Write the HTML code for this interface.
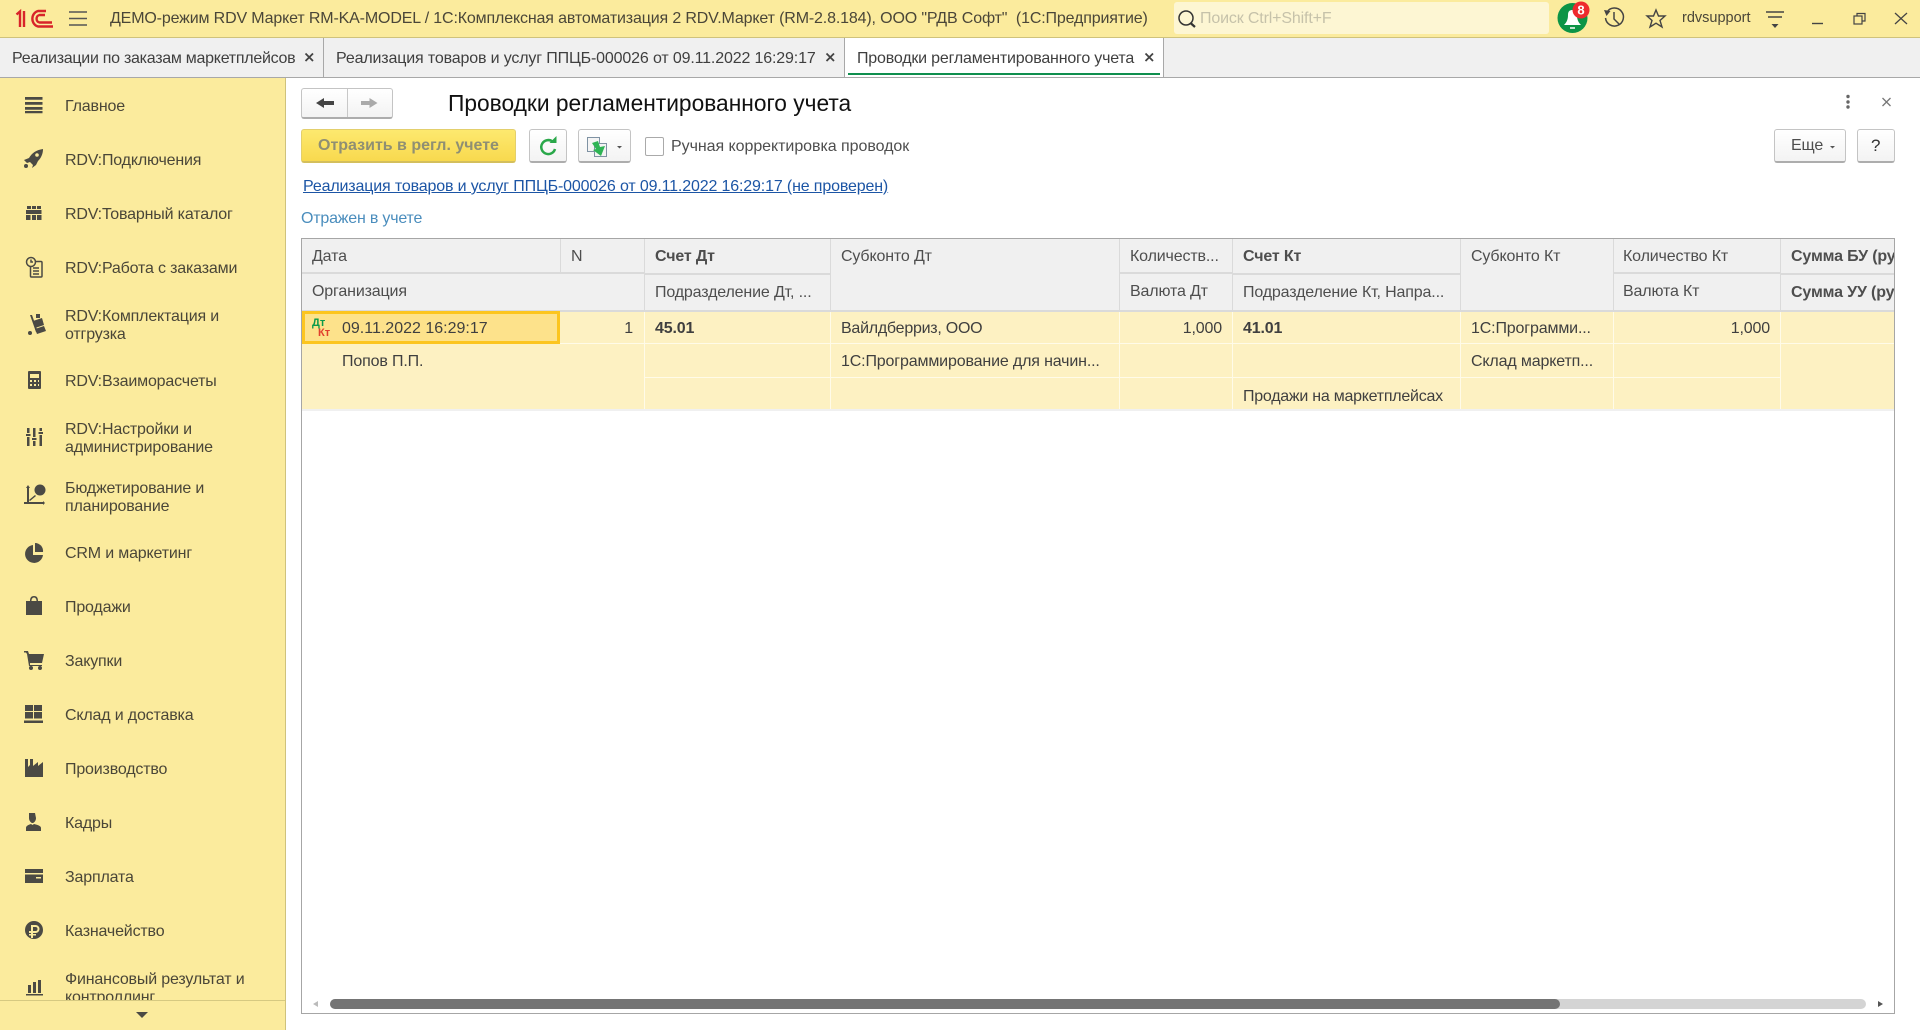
<!DOCTYPE html>
<html lang="ru"><head><meta charset="utf-8"><title>Проводки регламентированного учета</title>
<style>
html,body{margin:0;padding:0;width:1920px;height:1030px;overflow:hidden;background:#fff;font-family:"Liberation Sans",Arial,sans-serif;font-size:16px;letter-spacing:-.15px;color:#3f3f3f}
.t{position:absolute;white-space:nowrap;line-height:18px}
.box{position:absolute;box-sizing:border-box}
.box .t{margin-top:1px}
.btn{position:absolute;box-sizing:border-box;border:1px solid #c4c4c4;border-bottom:2px solid #adadad;border-radius:3px;background:linear-gradient(#fff,#f3f3f3)}
.n{color:#4a4638;line-height:18px;position:absolute;left:65px;white-space:nowrap;letter-spacing:-.17px;margin-top:1px}
.b{font-weight:bold}
.h{color:#4e4e4e}
.l{position:absolute}
.hl{background:#dadada}
.dl{background:#fffbe8}
</style></head><body>

<!-- top bar -->
<div class="box" style="left:0;top:0;width:1920px;height:38px;background:#fbeb9d;border-bottom:1px solid #cfc27c"></div>
<div class="t" style="left:110px;top:10px;color:#4a4638">ДЕМО-режим RDV Маркет RM-KA-MODEL / 1С:Комплексная автоматизация 2 RDV.Маркет (RM-2.8.184), ООО "РДВ Софт"&nbsp; (1С:Предприятие)</div>
<div class="box" style="left:1174px;top:2px;width:375px;height:32px;background:#fdf6d3;border-radius:3px"></div>
<div class="t" style="left:1200px;top:10px;color:#c6c2aa">Поиск Ctrl+Shift+F</div>
<div class="t" style="left:1682px;top:9px;color:#4a4638;font-size:14.5px;letter-spacing:0">rdvsupport</div>

<!-- tabs -->
<div class="box" style="left:0;top:38px;width:1920px;height:40px;background:#f0f0f0;border-bottom:1px solid #a8a8a8"></div>
<div class="box" style="left:323px;top:38px;width:1px;height:39px;background:#a8a8a8"></div>
<div class="box" style="left:844px;top:38px;width:320px;height:40px;background:#fff;border-left:1px solid #a8a8a8;border-right:1px solid #a8a8a8;border-bottom:1px solid #a8a8a8"></div>
<div class="box" style="left:848px;top:73px;width:312px;height:2px;background:#0f8f4e"></div>
<div class="t" style="left:12px;top:50px;letter-spacing:-.27px">Реализации по заказам маркетплейсов</div>
<div class="t" style="left:336px;top:50px">Реализация товаров и услуг ППЦБ-000026 от 09.11.2022 16:29:17</div>
<div class="t" style="left:857px;top:50px;letter-spacing:-.19px">Проводки регламентированного учета</div>

<!-- sidebar -->
<div class="box" style="left:0;top:78px;width:286px;height:952px;background:#fbeb9d;border-right:1px solid #cfc27c;overflow:hidden">
<div class="n" style="top:19px">Главное</div>
<div class="n" style="top:73px">RDV:Подключения</div>
<div class="n" style="top:127px">RDV:Товарный каталог</div>
<div class="n" style="top:181px">RDV:Работа с заказами</div>
<div class="n" style="top:229px">RDV:Комплектация и<br>отгрузка</div>
<div class="n" style="top:294px">RDV:Взаиморасчеты</div>
<div class="n" style="top:342px">RDV:Настройки и<br>администрирование</div>
<div class="n" style="top:401px">Бюджетирование и<br>планирование</div>
<div class="n" style="top:466px">CRM и маркетинг</div>
<div class="n" style="top:520px">Продажи</div>
<div class="n" style="top:574px">Закупки</div>
<div class="n" style="top:628px">Склад и доставка</div>
<div class="n" style="top:682px">Производство</div>
<div class="n" style="top:736px">Кадры</div>
<div class="n" style="top:790px">Зарплата</div>
<div class="n" style="top:844px">Казначейство</div>
<div class="n" style="top:892px">Финансовый результат и<br>контроллинг</div>
<div class="box" style="left:0;top:922px;width:285px;height:30px;background:#fbeb9d;border-top:1px solid #d6c981"></div>
</div>

<!-- content toolbar -->
<div class="t" style="left:448px;top:90px;font-size:22.75px;line-height:26px;color:#111;letter-spacing:0">Проводки регламентированного учета</div>
<div class="btn" style="left:301px;top:88px;width:92px;height:31px"></div>
<div class="box" style="left:347px;top:89px;width:1px;height:28px;background:#c8c8c8"></div>
<div class="box" style="left:301px;top:129px;width:215px;height:34px;border:1px solid #e3cf6c;border-bottom:2px solid #d4bf5c;border-radius:3px;background:linear-gradient(#fde96f,#f8d94e)"></div>
<div class="t b" style="left:318px;top:137px;color:#8f8f73;letter-spacing:0">Отразить в регл. учете</div>
<div class="btn" style="left:529px;top:129px;width:38px;height:34px"></div>
<div class="btn" style="left:578px;top:129px;width:53px;height:34px"></div>
<div class="box" style="left:645px;top:137px;width:19px;height:19px;border:1px solid #aaa;border-radius:2px;background:#fff"></div>
<div class="t" style="left:671px;top:138px;color:#4e4e4e;letter-spacing:-.05px">Ручная корректировка проводок</div>
<div class="t" style="left:303px;top:178px;color:#1c55a5;text-decoration:underline">Реализация товаров и услуг ППЦБ-000026 от 09.11.2022 16:29:17 (не проверен)</div>
<div class="t" style="left:301px;top:210px;color:#4a8dbd;letter-spacing:-.2px">Отражен в учете</div>
<div class="btn" style="left:1774px;top:129px;width:72px;height:34px"></div>
<div class="t" style="left:1791px;top:137px;color:#4e4e4e">Еще</div>
<div class="btn" style="left:1857px;top:129px;width:38px;height:34px"></div>
<div class="t" style="left:1871px;top:137px;color:#333;font-size:17px">?</div>

<!-- table -->
<div class="box" style="left:301px;top:238px;width:1594px;height:776px;border:1px solid #a6a6a6;background:#fff;overflow:hidden">
  <div class="box" style="left:0;top:0;width:1592px;height:72px;background:#f0f0f0"></div>
  <div class="box" style="left:0;top:72px;width:1592px;height:98px;background:#fdf1c2"></div>
  <div class="box" style="left:0;top:170px;width:1592px;height:2px;background:#f0f0f0"></div>
  <!-- header lines -->
  <div class="l hl" style="left:258px;top:0;width:1px;height:34px"></div>
  <div class="l hl" style="left:342px;top:0;width:1px;height:72px"></div>
  <div class="l hl" style="left:528px;top:0;width:1px;height:72px"></div>
  <div class="l hl" style="left:817px;top:0;width:1px;height:72px"></div>
  <div class="l hl" style="left:930px;top:0;width:1px;height:72px"></div>
  <div class="l hl" style="left:1158px;top:0;width:1px;height:72px"></div>
  <div class="l hl" style="left:1311px;top:0;width:1px;height:72px"></div>
  <div class="l hl" style="left:1478px;top:0;width:1px;height:72px"></div>
  <div class="l hl" style="left:0;top:33px;width:342px;height:2px"></div>
  <div class="l hl" style="left:343px;top:34px;width:185px;height:2px"></div>
  <div class="l hl" style="left:818px;top:33px;width:112px;height:2px"></div>
  <div class="l hl" style="left:931px;top:34px;width:227px;height:2px"></div>
  <div class="l hl" style="left:1312px;top:33px;width:166px;height:2px"></div>
  <div class="l hl" style="left:1479px;top:34px;width:114px;height:2px"></div>
  <div class="l hl" style="left:0;top:71px;width:1592px;height:2px"></div>
  <!-- data lines -->
  <div class="l dl" style="left:342px;top:73px;width:1px;height:97px"></div>
  <div class="l dl" style="left:528px;top:73px;width:1px;height:97px"></div>
  <div class="l dl" style="left:817px;top:73px;width:1px;height:97px"></div>
  <div class="l dl" style="left:930px;top:73px;width:1px;height:97px"></div>
  <div class="l dl" style="left:1158px;top:73px;width:1px;height:97px"></div>
  <div class="l dl" style="left:1311px;top:73px;width:1px;height:97px"></div>
  <div class="l dl" style="left:1478px;top:73px;width:1px;height:97px"></div>
  <div class="l dl" style="left:0;top:104px;width:1592px;height:1px"></div>
  <div class="l dl" style="left:343px;top:138px;width:1135px;height:1px"></div>
  <!-- selected -->
  <div class="box" style="left:0;top:72px;width:258px;height:33px;background:#fde28b;border:3px solid #fcc51f"></div>
  <!-- header text -->
  <div class="t h" style="left:10px;top:8px">Дата</div>
  <div class="t h" style="left:269px;top:8px">N</div>
  <div class="t b h" style="left:353px;top:8px">Счет Дт</div>
  <div class="t h" style="left:539px;top:8px">Субконто Дт</div>
  <div class="t h" style="left:828px;top:8px">Количеств...</div>
  <div class="t b h" style="left:941px;top:8px">Счет Кт</div>
  <div class="t h" style="left:1169px;top:8px">Субконто Кт</div>
  <div class="t h" style="left:1321px;top:8px">Количество Кт</div>
  <div class="t b h" style="left:1489px;top:8px">Сумма БУ (руб.)</div>
  <div class="t h" style="left:10px;top:43px">Организация</div>
  <div class="t h" style="left:353px;top:44px">Подразделение Дт, ...</div>
  <div class="t h" style="left:828px;top:43px">Валюта Дт</div>
  <div class="t h" style="left:941px;top:44px">Подразделение Кт, Напра...</div>
  <div class="t h" style="left:1321px;top:43px">Валюта Кт</div>
  <div class="t b h" style="left:1489px;top:44px">Сумма УУ (руб.)</div>
  <!-- data text -->
  <div class="t" style="left:40px;top:80px;letter-spacing:0">09.11.2022 16:29:17</div>
  <div class="t" style="left:40px;top:113px">Попов П.П.</div>
  <div class="t" style="left:321px;top:80px;width:10px;text-align:right">1</div>
  <div class="t b" style="left:353px;top:80px">45.01</div>
  <div class="t" style="left:539px;top:80px;letter-spacing:-.25px">Вайлдберриз, ООО</div>
  <div class="t" style="left:539px;top:113px">1С:Программирование для начин...</div>
  <div class="t" style="left:861px;top:80px;width:59px;text-align:right">1,000</div>
  <div class="t b" style="left:941px;top:80px">41.01</div>
  <div class="t" style="left:941px;top:148px;letter-spacing:-.25px">Продажи на маркетплейсах</div>
  <div class="t" style="left:1169px;top:80px">1С:Программи...</div>
  <div class="t" style="left:1169px;top:113px">Склад маркетп...</div>
  <div class="t" style="left:1409px;top:80px;width:59px;text-align:right">1,000</div>
  <!-- scrollbar -->
  <div class="box" style="left:28px;top:760px;width:1536px;height:10px;background:#d4d4d4;border-radius:5px"></div>
  <div class="box" style="left:28px;top:760px;width:1230px;height:10px;background:#747474;border-radius:5px"></div>
</div>
<div class="t" style="left:312px;top:318px;font-size:11px;line-height:11px;color:#0c9a4a;font-weight:bold;letter-spacing:0">Дт</div>
<div class="t" style="left:318px;top:328px;font-size:11px;line-height:11px;color:#e0402e;font-weight:bold;letter-spacing:0">Кт</div>

<!-- icons -->
<svg width="1920" height="1030" viewBox="0 0 1920 1030" style="position:absolute;left:0;top:0;pointer-events:none">
  <!-- 1C logo -->
  <g fill="none" stroke="#d8232a" stroke-width="2.4">
    <path d="M16.500 14.500L20 11.500V27M24 11V27"/>
    <path d="M46 11H38A7.500 8 0 0 0 38 26.500H53"/>
    <path d="M45 15H39.500A3.500 3.800 0 0 0 39.500 22.500H52"/>
  </g>
  <!-- hamburger -->
  <g stroke="#555" stroke-width="1.600"><path d="M69 12H87M69 18.500H87M69 25H87"/></g>
  <!-- search -->
  <circle cx="1186" cy="18" r="7" fill="none" stroke="#333" stroke-width="1.500"/><path d="M1190.500 23L1195 27" stroke="#333" stroke-width="2.200"/>
  <!-- bell -->
  <circle cx="1572.500" cy="18" r="15" fill="#0c9446"/>
  <path d="M1564 25C1567 22 1568 19 1568 15C1568 11 1570 10 1572.500 10C1575 10 1577 11 1577 15C1577 19 1578 22 1581 25Z" fill="#fff"/>
  <path d="M1570 28H1575" stroke="#fff" stroke-width="1.500"/>
  <circle cx="1581" cy="10" r="8.500" fill="#ee2a2e"/>
  <text x="1581" y="14.500" font-family="Liberation Sans" font-weight="bold" font-size="13" letter-spacing="0" fill="#fff" text-anchor="middle">8</text>
  <!-- history -->
  <g fill="none" stroke="#444" stroke-width="1.500"><path d="M1607 12A9 9 0 1 1 1605.500 18"/><path d="M1614 12V19L1619 24"/></g><path d="M1604 10L1610.500 11L1606.500 16Z" fill="#444"/>
  <!-- star -->
  <path d="M1656 10L1658.500 16H1665L1660 20.500L1662 27L1656 23.200L1650 27L1652 20.500L1647 16H1653.500Z" fill="none" stroke="#444" stroke-width="1.400"/>
  <!-- menu -->
  <g stroke="#444" stroke-width="1.400"><path d="M1766 12H1784M1768 17H1782"/></g><path d="M1771.500 24H1778.500L1775 28Z" fill="#444"/>
  <!-- window -->
  <path d="M1812 23.500H1823" stroke="#444" stroke-width="1.400"/>
  <g fill="none" stroke="#444" stroke-width="1.200"><rect x="1854" y="16" width="8" height="8"/><path d="M1857 16V13.500H1865V21H1862"/></g>
  <path d="M1895 13L1907 24M1907 13L1895 24" stroke="#444" stroke-width="1.300"/>
  <!-- tab close -->
  <g stroke="#444" stroke-width="1.800"><path d="M305.500 53.500L313 61M313 53.500L305.500 61"/><path d="M826.500 53.500L834 61M834 53.500L826.500 61"/><path d="M1145.500 53.500L1153 61M1153 53.500L1145.500 61"/></g>
  <!-- nav arrows -->
  <path d="M316 103L324 98V101H334V105H324V108Z" fill="#444"/>
  <path d="M377.500 103L369.500 98V101H361V105H369.500V108Z" fill="#aaa"/>
  <!-- kebab -->
  <g fill="#666"><circle cx="1848" cy="96.500" r="1.700"/><circle cx="1848" cy="102" r="1.700"/><circle cx="1848" cy="107" r="1.700"/></g>
  <path d="M1882.500 98L1890.500 106M1890.500 98L1882.500 106" stroke="#777" stroke-width="1.300"/>
  <!-- refresh -->
  <path d="M552.500 141.500A7 7 0 1 0 555 149" fill="none" stroke="#2aa84a" stroke-width="2.500"/><path d="M549.500 143H556.500V136Z" fill="#2aa84a"/>
  <!-- doc-arrow icon -->
  <rect x="587.500" y="137.500" width="12" height="14" fill="#f4f4f4" stroke="#7f92a3"/><rect x="594.500" y="143.500" width="12" height="13" fill="#f4f4f4" stroke="#7f92a3"/>
  <path d="M592 143L598 141L600 147L605 146L601 156L593 150L596 149Z" fill="#2fb455"/>
  <path d="M617 146H622L619.500 148.500Z" fill="#555"/>
  <path d="M1830 146H1835L1832.500 148.500Z" fill="#555"/>
  <!-- scroll arrows -->
  <path d="M313 1004L318 1001V1007Z" fill="#bbb"/><path d="M1883 1004L1878 1001V1007Z" fill="#555"/>
  <!-- sidebar icons -->
  <g fill="#4b4a44">
    <path d="M25 97h17.500v2.800H25zM25 102h17.500v2.800H25zM25 107h17.500v2.800H25zM25 111h17.500v2.200H25z"/>
    <path d="M43 149C36 150 32 153 29 158L24 160L27 163L30 162L33 165L32 168L36 165L38 161C41 158 43 154 43 149Z"/><circle cx="26" cy="166" r="2"/><circle cx="37" cy="155" r="1.800" fill="#fbeb9d"/>
    <path d="M27 206h4v3h-4zM32 206h4v3h-4zM37 206h4v3h-4zM26 210h15.500v4H26zM26 215h4.500v5H26zM32 215h4v5h-4zM37 215h4.500v5H37z"/>
    <path d="M36 314H40V318H36zM30 315H32L38 332H36Z"/><path d="M33 321L42 318L44 325L35 328ZM35 329L44 326L46 331L37 334Z"/><circle cx="30" cy="333" r="2"/>
    <path fill-rule="evenodd" d="M29 371h11a1 1 0 0 1 1 1v16a1 1 0 0 1-1 1H29a1 1 0 0 1-1-1v-16a1 1 0 0 1 1-1zM30 374v4h9v-4zM30 380v2h2v-2zM34 380v2h2v-2zM38 380v2h1v-2zM30 384v2h2v-2zM34 384v2h2v-2zM38 384v2h1v-2z"/>
    <path d="M27 428h2.500v5h-2.500zM27 437h2.500v9h-2.500zM26 434h4.500v2h-4.500zM33 428h2.500v9h-2.500zM33 441h2.500v5h-2.500zM32 438h4.500v2h-4.500zM39.500 428h2.500v3h-2.500zM39.500 435h2.500v11h-2.500zM38.500 432h4.500v2h-4.500z"/>
    <path d="M26 488l2-3 2 3h-1v14h14v-1l2 2-2 2v-1H24v-2h3V488zM29 500l6-5 1 1-6 5z"/><circle cx="40" cy="490" r="5.500"/>
    <path d="M33 545A9 9 0 1 0 43 555H33Z"/><path d="M35 543A8 8 0 0 1 43 552H35Z"/>
    <path fill-rule="evenodd" d="M26 601h4c0-3 1-5 4-5s4 2 4 5h4v14H26zM31.500 601h5c0-2-1-3.500-2.500-3.500s-2.500 1.500-2.500 3.500z"/>
    <path d="M24 651h4l1 3h15l-2 9H30v2h12v1H29l-2-12-1-1.500h-2z"/><circle cx="31" cy="668" r="2"/><circle cx="40" cy="668" r="2"/>
    <path d="M25 705h8v6h-8zM34 705h8v6h-8zM25 712h8v6.500h-8zM34 712h8v6.500h-8zM24 720.500h19v2.500H24z"/>
    <path d="M25 759h3v8l2-2v-6h3v7l5-4v4l5-4v15H25z"/>
    <path d="M29 813h6l1 5c0 2-1 4-3 5h-1c-2-1-3-3-3-5zM26 831v-3c0-2 2-3 5-4l1.500 1 1.500-1c4 1 7 2 7 4v3z"/>
    <path fill-rule="evenodd" d="M25 869h18v14H25zM25 873v1.500h18V873zM36 877v1.500h5V877z"/>
    <path fill-rule="evenodd" d="M34 921a9 9 0 1 1 0 18a9 9 0 0 1 0-18zM31 925v6h-2v2h2v1h-2v1.500h2V938h2v-2.500h3v-1.500h-3v-1h2.500a4 4 0 0 0 0-8zM33 927h2.500a2 2 0 0 1 0 4H33z"/>
    <path d="M28 985h3v8h-3zM33 982h3v11h-3zM38 980h3v13h-3zM26 994h17v1.500H26z"/>
    <path d="M136 1012H148L142 1018Z"/>
  </g>
  <!-- clipboard icon -->
  <g fill="none" stroke="#4b4a44" stroke-width="1.500">
    <rect x="30.500" y="261.500" width="11.500" height="15.500" rx="1"/>
    <circle cx="31" cy="262" r="4.500" fill="#fbeb9d"/>
    <path d="M33 268H39M33 271H39M33 274H39M31 259.500V262H33"/>
  </g>
</svg>
</body></html>
